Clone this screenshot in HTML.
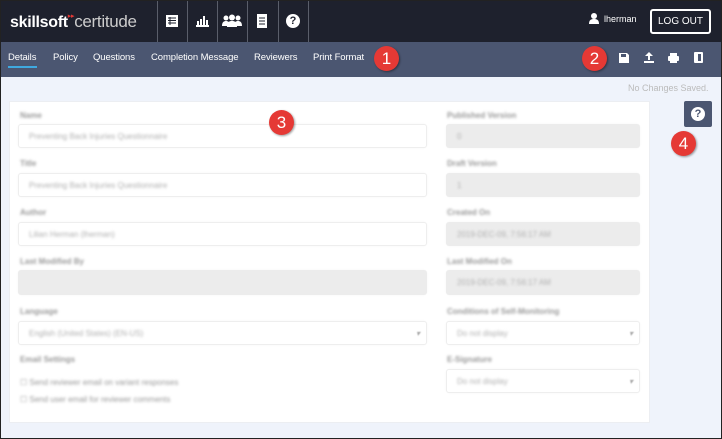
<!DOCTYPE html><html><head><style>
*{margin:0;padding:0;box-sizing:border-box}
body{width:722px;height:439px;overflow:hidden;font-family:"Liberation Sans",sans-serif;background:#eff3fb;position:relative}
.a{position:absolute}
.hdr{left:0;top:0;width:722px;height:42px;background:#1e212d}
.nav{left:0;top:42px;width:722px;height:35px;background:#4b5671}
.sep{top:0;width:1px;height:42px;background:#5a5e6a}
.nv{top:52px;color:#fff;font-size:9.5px;letter-spacing:-0.1px}
.card{left:9px;top:101px;width:641px;height:322px;background:#fff;border:1px solid #eceef2}
.lb{font-size:8px;color:#999;font-weight:bold;filter:blur(1.4px)}
.in{border:1px solid #eeeeee;border-radius:3px;background:#fff;font-size:8px;color:#b0b0b0;padding:7px 10px;height:24px;box-shadow:0 0 2px rgba(0,0,0,.04)}
.in span{filter:blur(1.4px);display:block}
.g{background:#ececec;border-color:#ececec}
.badge{width:25px;height:25px;border-radius:50%;background:#e53935;color:#fff;font-size:17px;text-align:center;line-height:25px;box-shadow:1px 1px 2px rgba(0,0,0,.4)}
.chev{position:absolute;right:6px;top:7px;font-size:8px;color:#aaa;filter:blur(.6px)}
</style></head><body>
<div class="a hdr"></div>
<div class="a" style="left:10px;top:12px;color:#fff;font-size:16px;letter-spacing:-0.3px;white-space:nowrap"><b>skillsoft</b><span style="color:#e53935;font-size:7px;vertical-align:top">▸▸</span><span style="font-weight:normal;color:#ccc;font-size:17px">certitude</span></div>
<div class="a sep" style="left:157px"></div><div class="a sep" style="left:187px"></div><div class="a sep" style="left:217px"></div><div class="a sep" style="left:247px"></div><div class="a sep" style="left:278px"></div><div class="a sep" style="left:308px"></div>
<svg class="a" style="left:165px;top:14px" width="14" height="14"><rect x="1" y="1" width="12" height="12" fill="#fff"/><g stroke="#1e212d" stroke-width="1"><line x1="3" y1="4" x2="11" y2="4"/><line x1="3" y1="6.5" x2="11" y2="6.5"/><line x1="3" y1="9" x2="11" y2="9"/><line x1="5" y1="3" x2="5" y2="11"/></g></svg>
<svg class="a" style="left:195px;top:14px" width="14" height="14" fill="#fff"><rect x="1" y="11" width="13" height="2"/><rect x="2" y="7" width="2" height="4"/><rect x="5" y="5" width="2" height="6"/><rect x="8" y="2" width="2" height="9"/><rect x="11" y="6" width="2" height="5"/></svg>
<svg class="a" style="left:222px;top:14px" width="20" height="14" fill="#fff"><circle cx="4" cy="4" r="2.5"/><circle cx="10" cy="3.5" r="3"/><circle cx="16" cy="4" r="2.5"/><path d="M0 12c0-4 2-5 4-5s4 1 4 5zM5 13c0-5 2-6 5-6s5 1 5 6zM12 12c0-4 2-5 4-5s4 1 4 5z"/></svg>
<svg class="a" style="left:256px;top:13px" width="12" height="16"><rect x="1" y="1" width="10" height="14" fill="#fff"/><g stroke="#1e212d"><line x1="3" y1="5" x2="9" y2="5"/><line x1="3" y1="8" x2="9" y2="8"/><line x1="3" y1="11" x2="9" y2="11"/></g></svg>
<div class="a" style="left:286px;top:14px;width:14px;height:14px;border-radius:50%;background:#fff;color:#1e212d;font-size:11px;font-weight:bold;text-align:center;line-height:14px">?</div>
<svg class="a" style="left:589px;top:13px" width="10" height="11" fill="#fff"><circle cx="5" cy="3" r="3"/><path d="M0 11c0-4 2-5 5-5s5 1 5 5z"/></svg>
<div class="a" style="left:604px;top:14px;color:#fff;font-size:9px">lherman</div>
<div class="a" style="left:650px;top:9px;width:61px;height:25px;border:2px solid #fff;border-radius:3px;color:#fff;font-size:10px;text-align:center;line-height:21px">LOG OUT</div>
<div class="a nav"></div>
<div class="a nv" style="left:8px">Details</div><div class="a" style="left:8px;top:66px;width:29px;height:2px;background:#3fa9e0"></div>
<div class="a nv" style="left:53px">Policy</div>
<div class="a nv" style="left:93px">Questions</div>
<div class="a nv" style="left:151px">Completion Message</div>
<div class="a nv" style="left:254px">Reviewers</div>
<div class="a nv" style="left:313px">Print Format</div>
<div class="a badge" style="left:374px;top:46px">1</div>
<div class="a badge" style="left:582px;top:46px">2</div>
<svg class="a" style="left:619px;top:53px" width="10" height="10" fill="#fff"><path d="M0 0h8l2 2v8H0z"/><rect x="2" y="1" width="5" height="3" fill="#4b5671"/></svg>
<svg class="a" style="left:644px;top:52px" width="10" height="11" fill="#fff"><path d="M5 0l4 4H6v4H4V4H1z"/><rect x="0" y="9" width="10" height="2"/></svg>
<svg class="a" style="left:668px;top:53px" width="11" height="10" fill="#fff"><rect x="2" y="0" width="7" height="3"/><rect x="0" y="3" width="11" height="5" rx="1"/><rect x="2" y="7" width="7" height="3"/></svg>
<svg class="a" style="left:694px;top:52px" width="9" height="11" fill="#fff"><rect x="0" y="0" width="9" height="11" rx="1"/><rect x="4" y="2" width="3" height="7" fill="#4b5671"/></svg>
<div class="a" style="left:628px;top:83px;font-size:9px;color:#bbb">No Changes Saved.</div>
<div class="a card"></div>
<div class="a" style="left:684px;top:101px;width:28px;height:26px;background:#4b5671;border-radius:2px"></div>
<div class="a" style="left:691px;top:107px;width:14px;height:14px;border-radius:50%;background:#fff;color:#4b5671;font-size:11px;font-weight:bold;text-align:center;line-height:14px">?</div>
<div class="a badge" style="left:671px;top:131px">4</div>

<div class="a lb" style="left:20px;top:111px">Name</div>
<div class="a in" style="left:18px;top:124px;width:409px"><span>Preventing Back Injuries Questionnaire</span></div>
<div class="a lb" style="left:20px;top:159px">Title</div>
<div class="a in" style="left:18px;top:173px;width:409px"><span>Preventing Back Injuries Questionnaire</span></div>
<div class="a lb" style="left:20px;top:208px">Author</div>
<div class="a in" style="left:18px;top:222px;width:409px"><span>Lilian Herman (lherman)</span></div>
<div class="a lb" style="left:20px;top:257px">Last Modified By</div>
<div class="a in g" style="left:18px;top:270px;width:409px;height:25px"></div>
<div class="a lb" style="left:20px;top:307px">Language</div>
<div class="a in" style="left:18px;top:321px;width:409px"><span>English (United States) (EN-US)</span><i class="chev">▾</i></div>
<div class="a lb" style="left:20px;top:355px">Email Settings</div>
<div class="a lb" style="left:20px;top:378px;font-weight:normal">☐ Send reviewer email on variant responses</div>
<div class="a lb" style="left:20px;top:395px;font-weight:normal">☐ Send user email for reviewer comments</div>

<div class="a lb" style="left:447px;top:111px">Published Version</div>
<div class="a in g" style="left:446px;top:124px;width:194px"><span>0</span></div>
<div class="a lb" style="left:447px;top:159px">Draft Version</div>
<div class="a in g" style="left:446px;top:173px;width:194px"><span>1</span></div>
<div class="a lb" style="left:447px;top:208px">Created On</div>
<div class="a in g" style="left:446px;top:222px;width:194px"><span>2019-DEC-09, 7:56:17 AM</span></div>
<div class="a lb" style="left:447px;top:257px">Last Modified On</div>
<div class="a in g" style="left:446px;top:270px;width:194px;height:25px"><span>2019-DEC-09, 7:56:17 AM</span></div>
<div class="a lb" style="left:447px;top:307px">Conditions of Self-Monitoring</div>
<div class="a in" style="left:446px;top:321px;width:194px"><span>Do not display</span><i class="chev">▾</i></div>
<div class="a lb" style="left:447px;top:355px">E-Signature</div>
<div class="a in" style="left:446px;top:369px;width:194px"><span>Do not display</span><i class="chev">▾</i></div>
<div class="a badge" style="left:269px;top:110px">3</div>
<div class="a" style="left:0;top:0;width:722px;height:439px;border:1px solid #222"></div>
</body></html>
